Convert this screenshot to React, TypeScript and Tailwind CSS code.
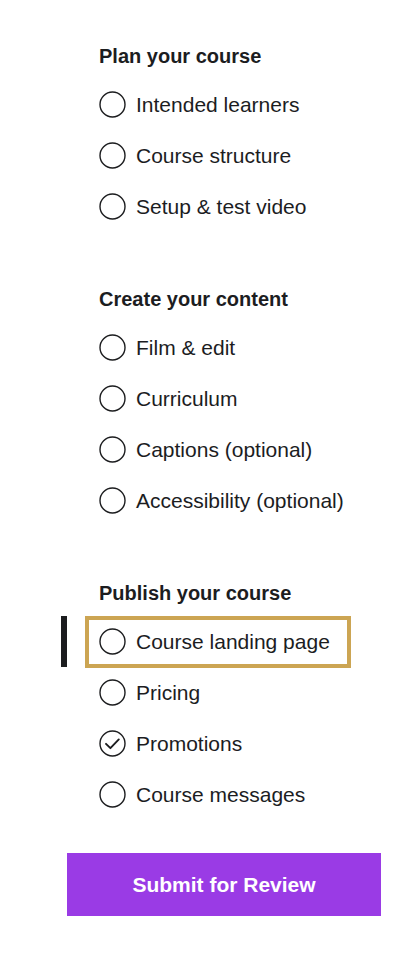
const sections = [
    {
        title: "Plan your course",
        items: [
            {label: "Intended learners"},
            {label: "Course structure"},
            {label: "Setup & test video"},
        ],
    },
    {
        title: "Create your content",
        items: [
            {label: "Film & edit"},
            {label: "Curriculum"},
            {label: "Captions (optional)"},
            {label: "Accessibility (optional)"},
        ],
    },
    {
        title: "Publish your course",
        items: [
            {label: "Course landing page", active: true},
            {label: "Pricing"},
            {label: "Promotions", done: true},
            {label: "Course messages"},
        ],
    },
]

function StepIcon({done}: {done?: boolean}) {
    return (
        <svg width="27" height="27" viewBox="0 0 27 27" fill="none" className="shrink-0">
            <circle cx="13.5" cy="13.5" r="12.5" stroke="#1c1d1f" strokeWidth="1.4"/>
            {done && (
                <path d="M7 13.8l4.4 4.4 8.4-8.8" stroke="#1c1d1f" strokeWidth="1.9" strokeLinecap="round" strokeLinejoin="round"/>
            )}
        </svg>
    )
}

function App() {
    return (
        <div className="w-[408px] min-h-[954px] bg-white text-[#1c1d1f] pt-[44px]" style={{fontFamily: '"Liberation Sans", Arial, sans-serif'}}>
            <div className="flex flex-col gap-[55px]">
                {sections.map(section => (
                    <div key={section.title}>
                        <h3 className="pl-[99px] text-[20px] leading-[24px] font-bold">{section.title}</h3>
                        <ul className="mt-[11px] flex flex-col">
                            {section.items.map(item => (
                                <li key={item.label} className="flex items-center gap-[22px] pl-[61px] h-[51px]">
                                    <span className={`w-[6px] h-[51px] ${item.active ? "bg-[#1c1d1f]" : "bg-transparent"}`}/>
                                    <div className={`flex items-center gap-[10px] h-[44px] w-[258px] pl-[10px] ${item.active ? "outline-[4px] outline-solid outline-[#cca553]" : ""}`}>
                                        <StepIcon done={item.done}/>
                                        <span className="text-[21px] leading-none">{item.label}</span>
                                    </div>
                                </li>
                            ))}
                        </ul>
                    </div>
                ))}
            </div>

            <div className="pl-[67px] mt-[33px]">
                <button className="w-[314px] h-[63px] bg-[#9a3be5] text-white text-[21px] font-bold">
                    Submit for Review
                </button>
            </div>
        </div>
    )
}

export default App
